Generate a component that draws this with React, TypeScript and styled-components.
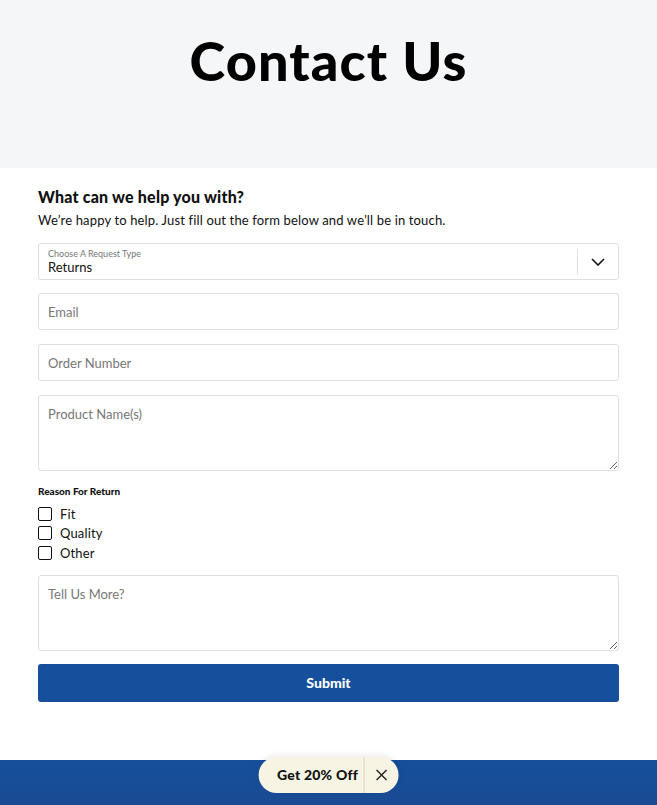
import React, { useState } from "react";
import styled, { createGlobalStyle } from "styled-components";

const GlobalStyle = createGlobalStyle`
  body {
    margin: 0;
    background: #fff;
    font-family: "Lato", "Inter", sans-serif;
    color: #111;
  }
  * { box-sizing: border-box; }
`;

const Hero = styled.header`
  height: 168px;
  background: #f5f6f8;
  display: flex;
  justify-content: center;
  padding-top: 30px;
`;

const Title = styled.h1`
  margin: 0;
  font-family: "Lato", sans-serif;
  font-weight: 900;
  font-size: 54px;
  line-height: 62px;
  letter-spacing: 1.1px;
  color: #000;
`;

const Form = styled.form`
  padding: 20px 38px 0;
  display: flex;
  flex-direction: column;
`;

const Heading = styled.h2`
  margin: 0;
  font-size: 16px;
  font-weight: 900;
  line-height: 18px;
  letter-spacing: 0.2px;
  color: #111;
`;

const Lead = styled.p`
  margin: 6px 0 15px;
  font-size: 13px;
  line-height: 16px;
  letter-spacing: 0.15px;
  color: #111;
`;

const Box = styled.div<{ $tall?: boolean; $gap?: number }>`
  height: ${p => (p.$tall ? "76px" : "37px")};
  border: 1px solid #e0e0e0;
  border-radius: 3px;
  margin-bottom: ${p => p.$gap ?? 14}px;
  background: #fff;
  position: relative;
`;

const SelectBox = styled(Box)`
  display: flex;
  align-items: stretch;
`;

const SelectText = styled.div`
  flex: 1;
  padding: 5px 9px 0;
  display: flex;
  flex-direction: column;
`;

const SmallLabel = styled.span`
  font-size: 9px;
  line-height: 10px;
  color: #777;
`;

const SelectValue = styled.span`
  font-size: 13px;
  line-height: 16px;
  color: #111;
`;

const Chevron = styled.div`
  width: 41px;
  margin: 5px 0;
  border-left: 1px solid #e0e0e0;
  display: flex;
  align-items: center;
  justify-content: center;
`;

const Input = styled.input`
  width: 100%;
  height: 100%;
  border: none;
  background: transparent;
  padding: 0 9px;
  font-family: inherit;
  font-size: 13px;
  color: #111;
  outline: none;
  &::placeholder { color: #777; }
`;

const TextArea = styled.textarea`
  width: 100%;
  height: 100%;
  border: none;
  background: transparent;
  padding: 10px 9px;
  font-family: inherit;
  font-size: 13px;
  line-height: 16px;
  color: #111;
  outline: none;
  resize: vertical;
  &::placeholder { color: #777; }
`;

const GroupLabel = styled.div`
  font-size: 10px;
  font-weight: 900;
  line-height: 12px;
  margin: 0 0 7px;
`;

const CheckRow = styled.label`
  display: flex;
  align-items: center;
  gap: 8px;
  height: 19.5px;
  font-size: 13px;
  letter-spacing: 0.15px;
  color: #111;
`;

const Check = styled.span`
  width: 14px;
  height: 14px;
  border: 1.5px solid #111;
  border-radius: 2px;
  background: #fff;
`;

const Checks = styled.div`
  display: flex;
  flex-direction: column;
  margin-bottom: 12px;
`;

const Submit = styled.button`
  height: 38px;
  border: none;
  border-radius: 3px;
  background: #164f9b;
  color: #fff;
  font-family: inherit;
  font-weight: 900;
  font-size: 14px;
  cursor: pointer;
`;

const Footer = styled.footer`
  margin-top: 58px;
  height: 50px;
  background: linear-gradient(#164f9b, #1a4a92);
  position: relative;
`;

const Pill = styled.div`
  position: absolute;
  top: -3px;
  left: 50%;
  transform: translateX(-50%);
  height: 36px;
  display: flex;
  align-items: center;
  background: #f7f4e4;
  border-radius: 18px;
  box-shadow: 0 -2px 6px rgba(0, 0, 0, 0.08);
`;

const PillText = styled.span`
  padding: 0 6px 0 19px;
  font-size: 14px;
  font-weight: 900;
  letter-spacing: 0.2px;
  color: #111;
  white-space: nowrap;
`;

const Close = styled.span`
  height: 100%;
  width: 35px;
  border-left: 1px solid #d9d5c4;
  display: flex;
  align-items: center;
  justify-content: center;
`;

const reasons = ["Fit", "Quality", "Other"];

export default function App() {
  const [checked, setChecked] = useState<string[]>([]);
  const toggle = (r: string) =>
    setChecked(c => (c.includes(r) ? c.filter(x => x !== r) : [...c, r]));

  return (
    <>
      <GlobalStyle />
      <Hero>
        <Title>Contact Us</Title>
      </Hero>
      <Form onSubmit={e => e.preventDefault()}>
        <Heading>What can we help you with?</Heading>
        <Lead>We’re happy to help. Just fill out the form below and we’ll be in touch.</Lead>
        <SelectBox $gap={13}>
          <SelectText>
            <SmallLabel>Choose A Request Type</SmallLabel>
            <SelectValue>Returns</SelectValue>
          </SelectText>
          <Chevron>
            <svg width="14" height="8" viewBox="0 0 14 8" fill="none">
              <path d="M1 1l6 6 6-6" stroke="#111" strokeWidth="1.6" />
            </svg>
          </Chevron>
        </SelectBox>
        <Box>
          <Input placeholder="Email" />
        </Box>
        <Box>
          <Input placeholder="Order Number" />
        </Box>
        <Box $tall>
          <TextArea placeholder="Product Name(s)" />
        </Box>
        <GroupLabel>Reason For Return</GroupLabel>
        <Checks>
          {reasons.map(r => (
            <CheckRow key={r} onClick={() => toggle(r)}>
              <Check style={{ background: checked.includes(r) ? "#111" : "#fff" }} />
              {r}
            </CheckRow>
          ))}
        </Checks>
        <Box $tall $gap={13}>
          <TextArea placeholder="Tell Us More?" />
        </Box>
        <Submit type="submit">Submit</Submit>
      </Form>
      <Footer>
        <Pill>
          <PillText>Get 20% Off</PillText>
          <Close>
            <svg width="12" height="12" viewBox="0 0 12 12">
              <path d="M1 1l10 10M11 1L1 11" stroke="#222" strokeWidth="1.4" />
            </svg>
          </Close>
        </Pill>
      </Footer>
    </>
  );
}
